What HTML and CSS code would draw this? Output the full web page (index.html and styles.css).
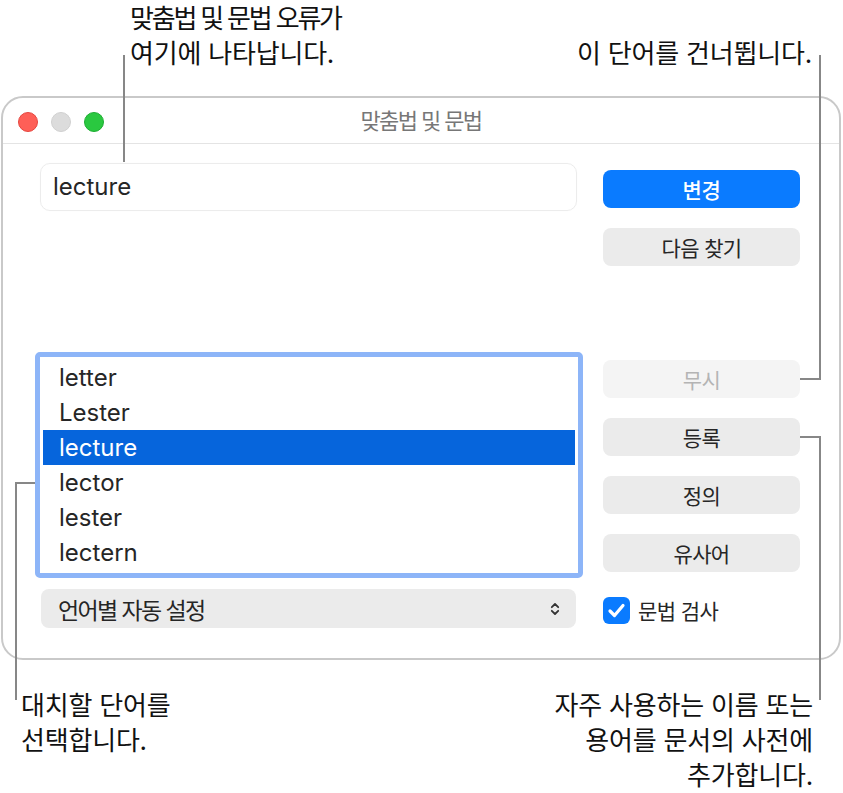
FILE: index.html
```html
<!DOCTYPE html>
<html lang="ko">
<head>
<meta charset="utf-8">
<title>맞춤법 및 문법</title>
<link rel="stylesheet" href="styles.css">
</head>
<body>
<div class="page">
  <div class="notes-top">
    <p class="note note-tl"><span class="tight">맞춤법 및 문법 오류가</span><br>여기에 나타납니다.</p>
    <p class="note note-tr">이 단어를 건너뜁니다.</p>
  </div>

  <div class="window">
    <div class="titlebar">
      <div class="lights">
        <span class="light red"></span>
        <span class="light gray"></span>
        <span class="light green"></span>
      </div>
      <div class="title">맞춤법 및 문법</div>
      <div class="spacer"></div>
    </div>
    <div class="content">
      <div class="col-left">
        <div class="field">lecture</div>
        <ul class="list">
          <li>letter</li>
          <li>Lester</li>
          <li class="selected">lecture</li>
          <li>lector</li>
          <li>lester</li>
          <li>lectern</li>
        </ul>
        <div class="popup">
          <span>언어별 자동 설정</span>
          <svg class="chev" width="10" height="16" viewBox="0 0 10 16"><path d="M1.8 6.2 L5 3 L8.2 6.2 M1.8 9.8 L5 13 L8.2 9.8" fill="none" stroke="#333" stroke-width="1.8" stroke-linecap="round" stroke-linejoin="round"/></svg>
        </div>
      </div>
      <div class="col-right">
        <div class="btn primary">변경</div>
        <div class="btn">다음 찾기</div>
        <div class="btn disabled gap-top">무시</div>
        <div class="btn">등록</div>
        <div class="btn">정의</div>
        <div class="btn">유사어</div>
        <div class="check">
          <span class="box"><svg width="27" height="27" viewBox="0 0 27 27"><path d="M7 14 L11.5 18.5 L20 8.5" fill="none" stroke="#fff" stroke-width="3.2" stroke-linecap="round" stroke-linejoin="round"/></svg></span>
          <span class="check-label">문법 검사</span>
        </div>
      </div>
    </div>
  </div>

  <div class="notes-bottom">
    <p class="note note-bl">대치할 단어를<br>선택합니다.</p>
    <p class="note note-br">자주 사용하는 이름 또는<br>용어를 문서의 사전에<br>추가합니다.</p>
  </div>

  <div class="leader lead-top-v"></div>
  <div class="leader lead-tr-v"></div>
  <div class="leader lead-tr-h"></div>
  <div class="leader lead-br-h"></div>
  <div class="leader lead-br-v"></div>
  <div class="leader lead-bl-h"></div>
  <div class="leader lead-bl-v"></div>
</div>
</body>
</html>
```

FILE: styles.css
```css
* { box-sizing: border-box; }

html, body {
  margin: 0;
  padding: 0;
  background: #ffffff;
}

body {
  font-family: Inter, "Noto Sans CJK KR", sans-serif;
  color: #1d1d1f;
}

.page {
  position: relative;
  width: 843px;
  height: 793px;
  overflow: hidden;
}

/* annotations */
.note {
  margin: 0;
  font-size: 26px;
  line-height: 35px;
  color: #111;
  letter-spacing: -0.2px;
  white-space: nowrap;
}

.note .tight { letter-spacing: -2.2px; }

.notes-top {
  height: 96px;
  display: flex;
  justify-content: space-between;
}

.note-tl {
  padding-left: 130px;
  padding-top: 1px;
}

.note-tr {
  padding-right: 31px;
  padding-top: 36px;
}

.notes-bottom {
  display: flex;
  justify-content: space-between;
  padding-top: 28px;
}

.note-bl { padding-left: 21px; }
.note-br { padding-right: 30px; text-align: right; }

/* window */
.window {
  margin-left: 1px;
  width: 840px;
  height: 564px;
  border: 2px solid #c9c9c9;
  border-radius: 22px;
  background: #fff;
  overflow: hidden;
}

.titlebar {
  height: 46px;
  border-bottom: 1px solid #e4e4e4;
  display: grid;
  grid-template-columns: 1fr auto 1fr;
  align-items: center;
  padding-top: 3px;
}

.lights {
  display: flex;
  gap: 13px;
  margin-left: 15px;
}

.light {
  width: 20px;
  height: 20px;
  border-radius: 50%;
}
.light.red { background: #fe5f57; border: 1px solid #e5463f; }
.light.gray { background: #dcdcdc; border: 1px solid #d0d0d0; }
.light.green { background: #2ac840; border: 1px solid #1ead33; }

.title {
  font-size: 22px;
  color: #777;
  letter-spacing: -1.6px;
  margin-bottom: 6px;
}

.content {
  display: flex;
  gap: 20px;
  padding: 19px 0 0 32px;
}

.col-left {
  width: 548px;
  display: flex;
  flex-direction: column;
}

.field {
  margin: 0 6px 0 5px;
  height: 48px;
  border: 1px solid #ececec;
  border-radius: 10px;
  font-size: 24px;
  line-height: 46px;
  padding-left: 12px;
  color: #262626;
  box-shadow: 0 0 1px rgba(0,0,0,0.05);
}

.list {
  list-style: none;
  margin: 141px 0 0 0;
  height: 226px;
  border: 5px solid #8db5f8;
  border-radius: 5px;
  padding: 3px;
  background: #fff;
}

.list li {
  height: 35px;
  line-height: 35px;
  font-size: 24px;
  padding-left: 16px;
  color: #262626;
}

.list li.selected {
  background: #0665dc;
  color: #fff;
}

.popup {
  margin: 11px 7px 0 6px;
  height: 39px;
  background: #ebebeb;
  border-radius: 8px;
  display: flex;
  align-items: center;
  justify-content: space-between;
  padding: 0 16px 0 17px;
  font-size: 23px;
  letter-spacing: -1.6px;
  color: #262626;
}

.chev { display: block; }

.col-right {
  width: 197px;
  display: flex;
  flex-direction: column;
  gap: 20px;
  padding-top: 7px;
}

.btn {
  height: 38px;
  border-radius: 8px;
  background: #ebebeb;
  display: flex;
  align-items: center;
  justify-content: center;
  font-size: 21px;
  color: #262626;
  letter-spacing: -0.6px;
}

.btn.primary {
  background: #0a7bff;
  color: #fff;
  font-weight: 500;
  letter-spacing: -0.3px;
}

.btn.disabled {
  background: #f4f4f4;
  color: #b4b4b4;
}

.gap-top { margin-top: 74px; }

.check {
  margin-top: 3px;
  display: flex;
  align-items: center;
  gap: 8px;
}

.box {
  width: 27px;
  height: 27px;
  border-radius: 6px;
  background: #0a7bff;
  display: block;
}
.box svg { display: block; }

.check-label {
  font-size: 21px;
  color: #262626;
  letter-spacing: -0.6px;
}

/* leader lines */
.leader {
  position: absolute;
  background: #878787;
}

.lead-top-v { left: 123px; top: 55px; width: 2px; height: 107px; }
.lead-tr-v  { left: 819px; top: 55px; width: 2px; height: 325px; }
.lead-tr-h  { left: 800px; top: 378px; width: 21px; height: 2px; }
.lead-br-h  { left: 800px; top: 436px; width: 21px; height: 2px; }
.lead-br-v  { left: 819px; top: 436px; width: 2px; height: 264px; }
.lead-bl-h  { left: 15px; top: 482px; width: 20px; height: 2px; }
.lead-bl-v  { left: 15px; top: 482px; width: 2px; height: 218px; }
```
